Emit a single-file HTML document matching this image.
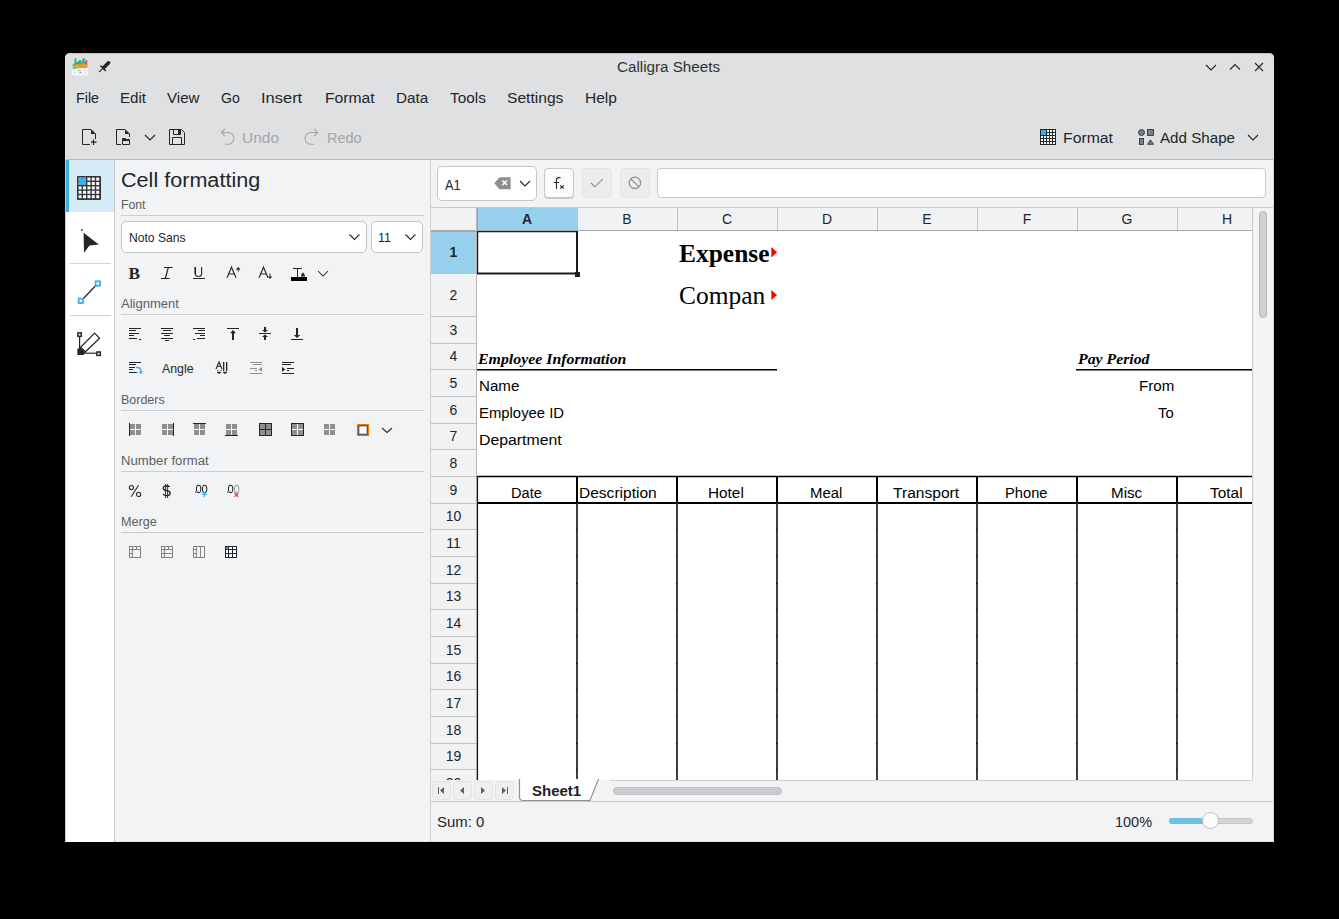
<!DOCTYPE html>
<html><head><meta charset="utf-8"><style>
*{box-sizing:border-box;margin:0;padding:0}
html,body{width:1339px;height:919px;background:#000;overflow:hidden;font-family:"Liberation Sans",sans-serif;color:#232629}
.a{position:absolute}
.t{position:absolute;white-space:nowrap;line-height:1;transform-origin:0 0}
svg.i{position:absolute;overflow:visible}

</style></head><body>
<div class="a" style="left:65px;top:53px;width:1209px;height:789px;background:#f2f3f5;border-radius:5px 5px 0 0"></div>
<div class="a" style="left:65px;top:53px;width:1209px;height:106px;background:#dee0e2;border-radius:5px 5px 0 0;border-top:1px solid #c4c6c8"></div>
<div class="a" style="left:65px;top:159px;width:1209px;height:1px;background:#b9bbbe;"></div>
<div class="a" style="left:65px;top:160px;width:1px;height:682px;background:#c9cbcd;"></div>
<div class="a" style="left:1273px;top:160px;width:1px;height:682px;background:#d8dadc;"></div>
<div class="a" style="left:65px;top:841px;width:1209px;height:1px;background:#e4e6e8;"></div>
<svg class="i" style="left:72px;top:58px" width="16" height="18" viewBox="0 0 16 18">
<rect x="0" y="10" width="16" height="7.6" fill="#f3f5f6" stroke="#e3e6e9" stroke-width="0.5"/>
<path d="M0.8 11 V6.5 L2.6 5 V0.2 H4.4 V5 L6.6 3 L7 2 H9.2 V5 L11 0.3 H12.8 V5 L15.2 2.5 V9 Z" fill="#1abc9c"/>
<rect x="4.8" y="4" width="1.3" height="4" fill="#da4453"/>
<rect x="9.9" y="4" width="1.3" height="3.4" fill="#da4453"/>
<rect x="13.5" y="2.2" width="1.6" height="7" fill="#da4453"/>
<path d="M0.8 6.5 L3 7 L5.5 5.8 L8 6.8 L10.5 5 L13 6.2 L15.2 5 V10 H0.8 Z" fill="#f39c1f"/>
<path d="M2 12.5h2.5M6.5 12.5h3M11.5 12.5h2.5M2 15h2M7 15h2.5M12 15h2" stroke="#d9c9c9" stroke-width="0.7"/>
<path d="M7.5 14.3h1.8" stroke="#da4453" stroke-width="0.8"/><path d="M6 12.2h1.5" stroke="#1abc9c" stroke-width="0.8"/>
</svg>
<svg class="i" style="left:97px;top:59px" width="14" height="14" viewBox="0 0 14 14"><path d="M2.2 12.9 L5.5 9.6" stroke="#232629" stroke-width="1.3"/><path d="M3.4 6.6 L8.8 12" stroke="#232629" stroke-width="1.4"/><path d="M6.8 8.6 L11.6 3.8" stroke="#232629" stroke-width="3.6" stroke-linecap="round"/></svg>
<svg class="i" style="left:1200px;top:57px" width="74" height="20" viewBox="0 0 74 20">
<path d="M6 8 L11 13 L16 8" fill="none" stroke="#232629" stroke-width="1.1"/>
<path d="M30 12.5 L35 7.5 L40 12.5" fill="none" stroke="#232629" stroke-width="1.1"/>
<path d="M55 6 L63 14 M63 6 L55 14" fill="none" stroke="#232629" stroke-width="1.1"/>
</svg>
<svg class="i" style="left:81px;top:129px" width="16" height="16" viewBox="0 0 16 16">
<path d="M1.5 15.5 V0.5 H10 L14.5 5 V10" fill="none" stroke="#232629"/>
<path d="M10 0.5 V5 H14.5 Z" fill="#232629"/>
<path d="M1.5 15.5 H9" stroke="#232629"/>
<path d="M12.5 10.5 V16 M10 13.2 H15.5" stroke="#232629" stroke-width="1.2"/>
</svg>
<svg class="i" style="left:115px;top:129px" width="16" height="16" viewBox="0 0 16 16">
<path d="M1.5 15.5 V0.5 H10 L14.5 5 V8" fill="none" stroke="#232629"/>
<path d="M10 0.5 V5 H14.5 Z" fill="#232629"/>
<path d="M1.5 15.5 H6" stroke="#232629"/>
<path d="M7.5 15.5 V9.5 H10.5 L11.5 10.5 H14.5 V15.5 Z" fill="none" stroke="#232629"/>
<path d="M7.5 9.5 H10.5 L11.5 10.5 H14.5 V12 H7.5Z" fill="#232629"/>
</svg>
<svg class="i" style="left:144px;top:133px" width="12" height="8" viewBox="0 0 12 8"><path d="M1 2 L6 7 L11 2" fill="none" stroke="#232629" stroke-width="1.1"/></svg>
<svg class="i" style="left:169px;top:129px" width="16" height="16" viewBox="0 0 16 16">
<path d="M0.5 0.5 H12.5 L15.5 3.5 V15.5 H0.5 Z" fill="none" stroke="#232629"/>
<path d="M4.5 0.5 V5.5 H11.5 V0.5" fill="none" stroke="#232629"/>
<rect x="9" y="1" width="2" height="4" fill="#232629"/>
<path d="M3.5 15.5 V8.5 H12.5 V15.5" fill="none" stroke="#232629"/>
</svg>
<svg class="i" style="left:221px;top:129px" width="14" height="16" viewBox="0 0 14 16">
<path d="M0.6 3.5 H7 A5.9 5.9 0 0 1 7 15.3 H3.8" fill="none" stroke="#a4a6a8" stroke-width="1.1"/>
<path d="M3.8 0 L0.4 3.5 L3.8 7" fill="none" stroke="#a4a6a8" stroke-width="1.1"/>
</svg>
<svg class="i" style="left:305px;top:129px" width="14" height="16" viewBox="0 0 14 16">
<path d="M12.4 3.5 H6 A5.9 5.9 0 0 0 6 15.3 H9.2" fill="none" stroke="#a4a6a8" stroke-width="1.1"/>
<path d="M9.2 0 L12.6 3.5 L9.2 7" fill="none" stroke="#a4a6a8" stroke-width="1.1"/>
</svg>
<svg class="i" style="left:1040px;top:129px" width="16" height="16" viewBox="0 0 16 16"><rect x="0" y="0" width="16" height="16" fill="#232629"/><rect x="1" y="1" width="2" height="2" fill="#fff"/><rect x="1" y="4" width="2" height="2" fill="#fff"/><rect x="1" y="7" width="2" height="2" fill="#fff"/><rect x="1" y="10" width="2" height="2" fill="#fff"/><rect x="1" y="13" width="2" height="2" fill="#fff"/><rect x="4" y="1" width="2" height="2" fill="#fff"/><rect x="4" y="4" width="2" height="2" fill="#fff"/><rect x="4" y="7" width="2" height="2" fill="#fff"/><rect x="4" y="10" width="2" height="2" fill="#fff"/><rect x="4" y="13" width="2" height="2" fill="#fff"/><rect x="7" y="1" width="2" height="2" fill="#fff"/><rect x="7" y="4" width="2" height="2" fill="#fff"/><rect x="7" y="7" width="2" height="2" fill="#fff"/><rect x="7" y="10" width="2" height="2" fill="#fff"/><rect x="7" y="13" width="2" height="2" fill="#fff"/><rect x="10" y="1" width="2" height="2" fill="#fff"/><rect x="10" y="4" width="2" height="2" fill="#fff"/><rect x="10" y="7" width="2" height="2" fill="#fff"/><rect x="10" y="10" width="2" height="2" fill="#fff"/><rect x="10" y="13" width="2" height="2" fill="#fff"/><rect x="13" y="1" width="2" height="2" fill="#fff"/><rect x="13" y="4" width="2" height="2" fill="#fff"/><rect x="13" y="7" width="2" height="2" fill="#fff"/><rect x="13" y="10" width="2" height="2" fill="#fff"/><rect x="13" y="13" width="2" height="2" fill="#fff"/><rect x="1" y="1" width="5" height="5" fill="#3daee9"/></svg>
<svg class="i" style="left:1138px;top:129px" width="16" height="16" viewBox="0 0 16 16">
<circle cx="3.5" cy="3.5" r="3" fill="#7b7e82" stroke="#232629" stroke-width="0.8"/>
<rect x="9.5" y="0.5" width="6" height="6" fill="#7b7e82" stroke="#232629" stroke-width="0.8"/>
<rect x="1.5" y="9.5" width="4" height="6" fill="#7b7e82" stroke="#232629" stroke-width="0.8"/>
<path d="M12.5 10.8 L15.5 15.3 H9.5 Z" fill="#7b7e82" stroke="#232629" stroke-width="0.8"/>
</svg>
<svg class="i" style="left:1247px;top:133px" width="12" height="8" viewBox="0 0 12 8"><path d="M1 2 L6 7 L11 2" fill="none" stroke="#232629" stroke-width="1.1"/></svg>
<div class="a" style="left:66px;top:160px;width:48px;height:682px;background:#ffffff;"></div>
<div class="a" style="left:114px;top:160px;width:1px;height:682px;background:#c6c8ca;"></div>
<div class="a" style="left:66px;top:160px;width:48px;height:52px;background:#d5ebf7;"></div>
<div class="a" style="left:66px;top:160px;width:3px;height:52px;background:#3daee9;"></div>
<svg class="i" style="left:77px;top:176px" width="24" height="24" viewBox="0 0 24 24"><rect x="0" y="0" width="24" height="24" rx="1" fill="#31363b"/><rect x="1.6" y="1.6" width="3" height="3" fill="#fff"/><rect x="1.6" y="6.0" width="3" height="3" fill="#fff"/><rect x="1.6" y="10.4" width="3" height="3" fill="#fff"/><rect x="1.6" y="14.8" width="3" height="3" fill="#fff"/><rect x="1.6" y="19.200000000000003" width="3" height="3" fill="#fff"/><rect x="6.0" y="1.6" width="3" height="3" fill="#fff"/><rect x="6.0" y="6.0" width="3" height="3" fill="#fff"/><rect x="6.0" y="10.4" width="3" height="3" fill="#fff"/><rect x="6.0" y="14.8" width="3" height="3" fill="#fff"/><rect x="6.0" y="19.200000000000003" width="3" height="3" fill="#fff"/><rect x="10.4" y="1.6" width="3" height="3" fill="#fff"/><rect x="10.4" y="6.0" width="3" height="3" fill="#fff"/><rect x="10.4" y="10.4" width="3" height="3" fill="#fff"/><rect x="10.4" y="14.8" width="3" height="3" fill="#fff"/><rect x="10.4" y="19.200000000000003" width="3" height="3" fill="#fff"/><rect x="14.8" y="1.6" width="3" height="3" fill="#fff"/><rect x="14.8" y="6.0" width="3" height="3" fill="#fff"/><rect x="14.8" y="10.4" width="3" height="3" fill="#fff"/><rect x="14.8" y="14.8" width="3" height="3" fill="#fff"/><rect x="14.8" y="19.200000000000003" width="3" height="3" fill="#fff"/><rect x="19.200000000000003" y="1.6" width="3" height="3" fill="#fff"/><rect x="19.200000000000003" y="6.0" width="3" height="3" fill="#fff"/><rect x="19.200000000000003" y="10.4" width="3" height="3" fill="#fff"/><rect x="19.200000000000003" y="14.8" width="3" height="3" fill="#fff"/><rect x="19.200000000000003" y="19.200000000000003" width="3" height="3" fill="#fff"/><rect x="1.6" y="1.6" width="7.4" height="7.4" fill="#3daee9"/></svg>
<div class="a" style="left:70px;top:263px;width:41px;height:1px;background:#d0d2d4;"></div>
<div class="a" style="left:70px;top:315px;width:41px;height:1px;background:#d0d2d4;"></div>
<svg class="i" style="left:80px;top:228px" width="20" height="26" viewBox="0 0 20 26"><rect x="1" y="1.2" width="1.6" height="1.6" fill="#232629"/><path d="M3.6 4.8 L18.8 16.5 L9.5 17.5 L4 24.8 Z" fill="#232629"/></svg>
<svg class="i" style="left:77px;top:280px" width="24" height="24" viewBox="0 0 24 24"><path d="M4 21 L20.5 3.8" stroke="#232629" stroke-width="1.3"/><rect x="1.6" y="18.6" width="4.4" height="4.4" fill="#fff" stroke="#3daee9" stroke-width="1.8"/><rect x="18.6" y="1.3" width="4.4" height="4.4" fill="#fff" stroke="#3daee9" stroke-width="1.8"/></svg>
<svg class="i" style="left:74px;top:328px" width="30" height="30" viewBox="0 0 30 30">
<path d="M5.6 8 V21" stroke="#232629" stroke-width="1.2"/>
<path d="M11 25.2 H23" stroke="#232629" stroke-width="1.2"/>
<rect x="3.9" y="4.9" width="3.4" height="3.4" fill="#fff" stroke="#232629" stroke-width="1.5"/>
<rect x="22.9" y="24" width="3.4" height="3.4" fill="#fff" stroke="#232629" stroke-width="1.5"/>
<path d="M20.6 5.2 L25.6 10.3 L11.4 23.8 L6.6 19.3 Z" fill="#fff" stroke="#232629" stroke-width="1.2" stroke-linejoin="miter"/>
<path d="M3.4 21 L6.3 19.2 L11.6 24.2 L9.6 27.1 L3.4 27.1 Z" fill="#232629"/>
</svg>
<div class="a" style="left:430px;top:160px;width:1px;height:682px;background:#cdcfd1;"></div>
<div class="a" style="left:121px;top:215px;width:303px;height:1px;background:#cbcdcf;"></div>
<div class="a" style="left:121px;top:314px;width:303px;height:1px;background:#cbcdcf;"></div>
<div class="a" style="left:121px;top:410px;width:303px;height:1px;background:#cbcdcf;"></div>
<div class="a" style="left:121px;top:471px;width:303px;height:1px;background:#cbcdcf;"></div>
<div class="a" style="left:121px;top:532px;width:303px;height:1px;background:#cbcdcf;"></div>
<div class="a" style="left:121px;top:221px;width:246px;height:32px;background:#fff;border:1px solid #c3c5c7;border-radius:5px"></div>
<div class="a" style="left:371px;top:221px;width:52px;height:32px;background:#fff;border:1px solid #c3c5c7;border-radius:5px"></div>
<svg class="i" style="left:348px;top:233px" width="14" height="9" viewBox="0 0 14 9"><path d="M1.5 1.5 L6.5 6.5 L11.5 1.5" fill="none" stroke="#232629" stroke-width="1.1"/></svg>
<svg class="i" style="left:404px;top:233px" width="14" height="9" viewBox="0 0 14 9"><path d="M1.5 1.5 L6.5 6.5 L11.5 1.5" fill="none" stroke="#232629" stroke-width="1.1"/></svg>
<svg class="i" style="left:128px;top:265px" width="15" height="16" viewBox="0 0 15 16"><text x="0.6" y="13.9" font-family="Liberation Serif" font-weight="bold" font-size="16.5" fill="#232629" transform="scale(1.05,1)">B</text></svg>
<svg class="i" style="left:160px;top:266px" width="14" height="14" viewBox="0 0 14 14"><path d="M4 1.5 H12.6 M1 12.5 H9.6 M8.3 1.5 L5.3 12.5" stroke="#232629" stroke-width="1.2" fill="none"/></svg>
<svg class="i" style="left:192px;top:266px" width="14" height="14" viewBox="0 0 14 14"><path d="M3.3 1 V7.5 Q3.3 10.5 6.5 10.5 Q9.6 10.5 9.6 7.5 V1" fill="none" stroke="#232629" stroke-width="1.1"/><path d="M3.3 1 V8" stroke="#232629" stroke-width="1.5"/></svg>
<svg class="i" style="left:226px;top:266px" width="15" height="13" viewBox="0 0 15 13"><path d="M1 11.8 L5.5 1.2 L10 11.8 M2.7 8 H8.3" fill="none" stroke="#232629" stroke-width="1.15"/><path d="M12.2 5.5 V2 M10.5 3.6 L12.2 1.8 L13.9 3.6" fill="none" stroke="#232629" stroke-width="1.05"/></svg>
<svg class="i" style="left:258px;top:266px" width="15" height="14" viewBox="0 0 15 14"><path d="M1 11.8 L5.5 1.2 L10 11.8 M2.7 8 H8.3" fill="none" stroke="#232629" stroke-width="1.15"/><path d="M12 7.5 V12 M10.3 10.5 L12 12.3 L13.7 10.5" fill="none" stroke="#232629" stroke-width="1.05"/></svg>
<svg class="i" style="left:300px;top:272px" width="6" height="5" viewBox="0 0 6 5"><path d="M0.8 4.6 L1.8 1.8 L3 0.6 L4.2 1.8 L5.2 4.6 Z" fill="#232629"/></svg>
<svg class="i" style="left:317px;top:270px" width="12" height="7" viewBox="0 0 12 7"><path d="M1 1 L6 6 L11 1" fill="none" stroke="#232629" stroke-width="1.05"/></svg>
<svg class="i" style="left:135px;top:366px" width="8" height="9" viewBox="0 0 8 9"><path d="M1.2 1.5 H2.5 Q5.8 1.5 5.8 4.8 V7" fill="none" stroke="#3daee9" stroke-width="1.3"/><path d="M3.6 5.6 L5.8 8.2 L8 5.6 Z" fill="#3daee9"/></svg>
<svg class="i" style="left:215px;top:361px" width="13" height="14" viewBox="0 0 13 14"><path d="M1 8 L4 1 L7 8 M2.2 5.3 H5.8" fill="none" stroke="#232629" stroke-width="1.1"/><path d="M2.4 9.4 h1 M5.6 9.4 h1" stroke="#232629" stroke-width="1"/><path d="M2 11.2 L4 12.6 L6 11.2 Z M8 11.2 L10 12.6 L12 11.2 Z" fill="#232629" stroke="#232629" stroke-width="0.8"/></svg>
<svg class="i" style="left:381px;top:427px" width="12" height="7" viewBox="0 0 12 7"><path d="M1 1 L6 5.5 L11 1" fill="none" stroke="#232629" stroke-width="1.05"/></svg>
<svg class="i" style="left:128px;top:483px" width="14" height="16" viewBox="0 0 14 16"><circle cx="3.4" cy="4.5" r="2.1" fill="none" stroke="#232629" stroke-width="1.05"/><circle cx="10.6" cy="11.4" r="2.1" fill="none" stroke="#232629" stroke-width="1.05"/><path d="M10.6 2.2 L3.2 13.7" stroke="#232629" stroke-width="1.05"/></svg>
<svg class="i" style="left:162px;top:483px" width="10" height="16" viewBox="0 0 10 16"><path d="M7.6 4 Q7 3 4.8 3 Q1.2 3 1.2 5.3 Q1.2 7.2 4.8 7.7 Q8.2 8.2 8.2 10.3 Q8.2 12.6 4.6 12.6 Q2 12.6 1 11" fill="none" stroke="#232629" stroke-width="1.3"/><path d="M3.6 1 V15 M5.6 1 V15" stroke="#232629" stroke-width="0.9"/></svg>
<svg class="i" style="left:194px;top:483px" width="15" height="15" viewBox="0 0 15 15"><rect x="1" y="8.6" width="1.1" height="1.1" fill="#232629"/><ellipse cx="4.6" cy="6" rx="2.2" ry="3.7" fill="none" stroke="#232629" stroke-width="1.05"/><ellipse cx="10.6" cy="6" rx="2.2" ry="3.7" fill="none" stroke="#232629" stroke-width="1.05"/><path d="M10.4 8.8 V14 M7.9 11.4 H12.9" stroke="#3daee9" stroke-width="1.3"/></svg>
<svg class="i" style="left:226px;top:483px" width="15" height="15" viewBox="0 0 15 15"><rect x="1" y="8.6" width="1.1" height="1.1" fill="#232629"/><ellipse cx="4.6" cy="6" rx="2.2" ry="3.7" fill="none" stroke="#232629" stroke-width="1.05"/><ellipse cx="10.6" cy="6" rx="2.2" ry="3.7" fill="none" stroke="#95979a" stroke-width="1.05"/><path d="M8.5 10 L12.3 13.8 M12.3 10 L8.5 13.8" stroke="#da4453" stroke-width="1.2"/></svg>
<svg class="i" style="left:0;top:0" width="1339" height="919" shape-rendering="auto"><rect x="193" y="278" width="12" height="1" fill="#232629"/><rect x="293" y="268" width="9" height="1" fill="#232629"/><rect x="297" y="268" width="1" height="9" fill="#232629"/><rect x="291" y="277" width="16" height="4" fill="#000"/><rect x="129" y="328" width="12" height="1" fill="#232629"/><rect x="129" y="330" width="7" height="1" fill="#232629"/><rect x="129" y="333" width="10" height="1" fill="#232629"/><rect x="129" y="335" width="5" height="1" fill="#232629"/><rect x="129" y="338" width="8" height="1" fill="#232629"/><rect x="139" y="339" width="2" height="1" fill="#232629"/><rect x="161" y="328" width="12" height="1" fill="#232629"/><rect x="163" y="330" width="8" height="1" fill="#232629"/><rect x="161" y="333" width="12" height="1" fill="#232629"/><rect x="164" y="335" width="6" height="1" fill="#232629"/><rect x="161" y="338" width="12" height="1" fill="#232629"/><rect x="165" y="340" width="4" height="1" fill="#232629"/><rect x="193" y="328" width="12" height="1" fill="#232629"/><rect x="198" y="330" width="7" height="1" fill="#232629"/><rect x="195" y="333" width="10" height="1" fill="#232629"/><rect x="200" y="335" width="5" height="1" fill="#232629"/><rect x="197" y="338" width="8" height="1" fill="#232629"/><rect x="193" y="339" width="2" height="1" fill="#232629"/><rect x="227" y="328" width="12" height="1" fill="#232629"/><rect x="232" y="333" width="2" height="7" fill="#232629"/><path d="M230 333.3 L233 330 L236 333.3 Z" fill="#232629"/><rect x="259" y="333" width="12" height="1" fill="#232629"/><rect x="264" y="327" width="2" height="3" fill="#232629"/><path d="M262 330 L265 332.6 L268 330 Z" fill="#232629"/><rect x="264" y="337" width="2" height="3" fill="#232629"/><path d="M262 337 L265 334.4 L268 337 Z" fill="#232629"/><rect x="291" y="339" width="12" height="1" fill="#232629"/><rect x="296" y="328" width="2" height="7" fill="#232629"/><path d="M293.8 335 L297 338 L300.2 335 Z" fill="#232629"/><rect x="129" y="362" width="12" height="1" fill="#232629"/><rect x="129" y="364" width="7" height="1" fill="#232629"/><rect x="129" y="367" width="6" height="1" fill="#232629"/><rect x="129" y="369" width="4" height="1" fill="#232629"/><rect x="129" y="372" width="8" height="1" fill="#232629"/><rect x="223" y="362" width="1.3" height="9" fill="#232629"/><rect x="226" y="362" width="1.3" height="9" fill="#232629"/><rect x="250" y="362" width="12" height="1" fill="#8d8f91"/><rect x="253" y="364" width="9" height="1" fill="#8d8f91"/><rect x="250" y="368" width="7" height="1" fill="#8d8f91"/><rect x="255" y="370" width="2" height="1" fill="#8d8f91"/><rect x="250" y="373" width="12" height="1" fill="#8d8f91"/><path d="M262 367 L258.6 369.4 L262 371.8 Z" fill="#8d8f91"/><rect x="282" y="362" width="12" height="1" fill="#232629"/><rect x="282" y="364" width="9" height="1" fill="#232629"/><rect x="287" y="368" width="7" height="1" fill="#232629"/><rect x="287" y="370" width="2" height="1" fill="#232629"/><rect x="282" y="373" width="12" height="1" fill="#232629"/><path d="M282 367 L285.4 369.4 L282 371.8 Z" fill="#232629"/><rect x="130" y="424" width="5" height="5" fill="#8e8f91"/><rect x="130" y="430" width="5" height="5" fill="#8e8f91"/><rect x="136" y="424" width="5" height="5" fill="#8e8f91"/><rect x="136" y="430" width="5" height="5" fill="#8e8f91"/><rect x="129" y="423" width="1" height="13" fill="#232629"/><rect x="162" y="424" width="5" height="5" fill="#8e8f91"/><rect x="162" y="430" width="5" height="5" fill="#8e8f91"/><rect x="168" y="424" width="5" height="5" fill="#8e8f91"/><rect x="168" y="430" width="5" height="5" fill="#8e8f91"/><rect x="173" y="423" width="1" height="13" fill="#232629"/><rect x="194" y="424" width="5" height="5" fill="#8e8f91"/><rect x="194" y="430" width="5" height="5" fill="#8e8f91"/><rect x="200" y="424" width="5" height="5" fill="#8e8f91"/><rect x="200" y="430" width="5" height="5" fill="#8e8f91"/><rect x="193" y="423" width="13" height="1" fill="#232629"/><rect x="226" y="424" width="5" height="5" fill="#8e8f91"/><rect x="226" y="430" width="5" height="5" fill="#8e8f91"/><rect x="232" y="424" width="5" height="5" fill="#8e8f91"/><rect x="232" y="430" width="5" height="5" fill="#8e8f91"/><rect x="225" y="435" width="13" height="1" fill="#232629"/><rect x="260" y="424" width="5" height="5" fill="#8e8f91"/><rect x="260" y="430" width="5" height="5" fill="#8e8f91"/><rect x="266" y="424" width="5" height="5" fill="#8e8f91"/><rect x="266" y="430" width="5" height="5" fill="#8e8f91"/><rect x="259.5" y="423.5" width="12" height="12" fill="none" stroke="#232629"/><rect x="265" y="424" width="1" height="11" fill="#232629"/><rect x="260" y="429" width="11" height="1" fill="#232629"/><rect x="292" y="424" width="5" height="5" fill="#8e8f91"/><rect x="292" y="430" width="5" height="5" fill="#8e8f91"/><rect x="298" y="424" width="5" height="5" fill="#8e8f91"/><rect x="298" y="430" width="5" height="5" fill="#8e8f91"/><rect x="291.5" y="423.5" width="12" height="12" fill="none" stroke="#232629"/><rect x="297" y="424" width="1" height="11" fill="#fff"/><rect x="292" y="429" width="11" height="1" fill="#fff"/><rect x="324" y="424" width="5" height="5" fill="#8e8f91"/><rect x="324" y="430" width="5" height="5" fill="#8e8f91"/><rect x="330" y="424" width="5" height="5" fill="#8e8f91"/><rect x="330" y="430" width="5" height="5" fill="#8e8f91"/><rect x="357.6" y="424.6" width="10.8" height="10.8" fill="#fff" stroke="#f67400" stroke-width="1.3"/><rect x="358.75" y="425.75" width="8.5" height="8.5" fill="none" stroke="#232629" stroke-width="1"/><rect x="129.5" y="546.5" width="11" height="11" fill="none" stroke="#828486"/><rect x="129" y="549" width="12" height="1" fill="#828486"/><rect x="132" y="546" width="1" height="12" fill="#828486"/><rect x="136" y="546" width="1" height="3" fill="#828486"/><rect x="129" y="553" width="4" height="1" fill="#828486"/><rect x="161.5" y="546.5" width="11" height="11" fill="none" stroke="#828486"/><rect x="161" y="549" width="12" height="1" fill="#828486"/><rect x="161" y="553" width="12" height="1" fill="#828486"/><rect x="164" y="546" width="1" height="12" fill="#828486"/><rect x="168" y="546" width="1" height="3" fill="#828486"/><rect x="193.5" y="546.5" width="11" height="11" fill="none" stroke="#828486"/><rect x="193" y="549" width="4" height="1" fill="#828486"/><rect x="193" y="553" width="4" height="1" fill="#828486"/><rect x="196" y="546" width="1" height="12" fill="#828486"/><rect x="200" y="546" width="1" height="12" fill="#828486"/><rect x="225" y="546" width="12" height="12" fill="#232629"/><rect x="226" y="547" width="2" height="2" fill="#fff"/><rect x="226" y="550" width="2" height="3" fill="#fff"/><rect x="226" y="554" width="2" height="3" fill="#fff"/><rect x="229" y="547" width="3" height="2" fill="#fff"/><rect x="229" y="550" width="3" height="3" fill="#fff"/><rect x="229" y="554" width="3" height="3" fill="#fff"/><rect x="233" y="547" width="3" height="2" fill="#fff"/><rect x="233" y="550" width="3" height="3" fill="#fff"/><rect x="233" y="554" width="3" height="3" fill="#fff"/><rect x="226" y="547" width="2" height="2" fill="#3daee9"/></svg>
<div class="a" style="left:437px;top:166px;width:100px;height:35px;background:#fff;border:1px solid #c4c6c8;border-radius:5px"></div>
<svg class="i" style="left:494px;top:176.5px" width="17" height="13" viewBox="0 0 17 13"><path d="M0.3 6.3 L5.5 0.3 H16.6 V12.3 H5.5 Z" fill="#8c8e90"/><path d="M8.5 3.5 L13 8 M13 3.5 L8.5 8" stroke="#fff" stroke-width="1.6"/></svg>
<svg class="i" style="left:519px;top:180px" width="12" height="7" viewBox="0 0 12 7"><path d="M1 1 L6 6 L11 1" fill="none" stroke="#232629" stroke-width="1.1"/></svg>
<div class="a" style="left:544px;top:168px;width:30px;height:30px;background:#fcfcfc;border:1px solid #c5c7c9;border-radius:4px;box-shadow:0 1px 0 #c9cbcd"></div>
<svg class="i" style="left:544px;top:168px" width="30" height="30" viewBox="0 0 30 30"><path d="M12.5 21 V12 Q12.5 9.6 14.8 9.6 H16.5" fill="none" stroke="#232629" stroke-width="1.05"/><path d="M9.8 14.5 H15.2" stroke="#232629" stroke-width="1.05"/><path d="M16.2 17.3 L19.8 20.7 M19.8 17.3 L16.2 20.7" stroke="#232629" stroke-width="1.1"/></svg>
<div class="a" style="left:582px;top:168px;width:30px;height:30px;background:#ececed;border:1px solid #e1e2e4;border-radius:4px"></div>
<svg class="i" style="left:590px;top:178px" width="14" height="10" viewBox="0 0 14 10"><path d="M1 5 L4.8 8.8 L13 0.8" fill="none" stroke="#8a8c8e" stroke-width="1.1"/></svg>
<div class="a" style="left:620px;top:168px;width:30px;height:30px;background:#ececed;border:1px solid #e1e2e4;border-radius:4px"></div>
<svg class="i" style="left:628px;top:176px" width="14" height="14" viewBox="0 0 14 14"><circle cx="6.9" cy="6.9" r="5.7" fill="none" stroke="#8a8c8e" stroke-width="1.2"/><path d="M2.9 2.9 L10.9 10.9" stroke="#8a8c8e" stroke-width="1.2"/></svg>
<div class="a" style="left:657px;top:168px;width:609px;height:30px;background:#fff;border:1px solid #c8cacc;border-radius:4px"></div>
<div class="a" style="left:431px;top:207px;width:842px;height:1px;background:#c8c9cb;"></div>
<div class="a" style="left:431px;top:208px;width:821px;height:22px;background:#f1f2f4;"></div>
<div class="a" style="left:477px;top:208px;width:100px;height:22px;background:#97d0ed;"></div>
<div class="a" style="left:431px;top:230px;width:821px;height:1px;background:#a9abad;"></div>
<div class="a" style="left:431px;top:231px;width:45px;height:549px;background:#f1f2f4;"></div>
<div class="a" style="left:431px;top:231px;width:45px;height:42px;background:#97d0ed;"></div>
<div class="a" style="left:476px;top:208px;width:1px;height:572px;background:#b5b7b9;"></div>
<div class="a" style="left:477px;top:208px;width:1px;height:22px;background:#6fb3dc;"></div>
<div class="a" style="left:431px;top:231px;width:45px;height:1px;background:#6fb3dc;"></div>
<div class="a" style="left:577px;top:208px;width:1px;height:22px;background:#c0c2c4;"></div>
<div class="a" style="left:677px;top:208px;width:1px;height:22px;background:#c0c2c4;"></div>
<div class="a" style="left:777px;top:208px;width:1px;height:22px;background:#c0c2c4;"></div>
<div class="a" style="left:877px;top:208px;width:1px;height:22px;background:#c0c2c4;"></div>
<div class="a" style="left:977px;top:208px;width:1px;height:22px;background:#c0c2c4;"></div>
<div class="a" style="left:1077px;top:208px;width:1px;height:22px;background:#c0c2c4;"></div>
<div class="a" style="left:1177px;top:208px;width:1px;height:22px;background:#c0c2c4;"></div>
<div class="a" style="left:477px;top:231px;width:775px;height:549px;background:#fff;"></div>
<svg class="i" style="left:431px;top:231px" width="45" height="549" viewBox="0 0 45 549"><line x1="0" x2="45" y1="42.5" y2="42.5" stroke="#c0c2c4" stroke-width="1"/><line x1="0" x2="45" y1="85.5" y2="85.5" stroke="#c0c2c4" stroke-width="1"/><line x1="0" x2="45" y1="112.5" y2="112.5" stroke="#c0c2c4" stroke-width="1"/><line x1="0" x2="45" y1="138.5" y2="138.5" stroke="#c0c2c4" stroke-width="1"/><line x1="0" x2="45" y1="165.5" y2="165.5" stroke="#c0c2c4" stroke-width="1"/><line x1="0" x2="45" y1="192.5" y2="192.5" stroke="#c0c2c4" stroke-width="1"/><line x1="0" x2="45" y1="218.5" y2="218.5" stroke="#c0c2c4" stroke-width="1"/><line x1="0" x2="45" y1="245.5" y2="245.5" stroke="#c0c2c4" stroke-width="1"/><line x1="0" x2="45" y1="272.5" y2="272.5" stroke="#c0c2c4" stroke-width="1"/><line x1="0" x2="45" y1="298.5" y2="298.5" stroke="#c0c2c4" stroke-width="1"/><line x1="0" x2="45" y1="325.5" y2="325.5" stroke="#c0c2c4" stroke-width="1"/><line x1="0" x2="45" y1="352.5" y2="352.5" stroke="#c0c2c4" stroke-width="1"/><line x1="0" x2="45" y1="378.5" y2="378.5" stroke="#c0c2c4" stroke-width="1"/><line x1="0" x2="45" y1="405.5" y2="405.5" stroke="#c0c2c4" stroke-width="1"/><line x1="0" x2="45" y1="432.5" y2="432.5" stroke="#c0c2c4" stroke-width="1"/><line x1="0" x2="45" y1="458.5" y2="458.5" stroke="#c0c2c4" stroke-width="1"/><line x1="0" x2="45" y1="485.5" y2="485.5" stroke="#c0c2c4" stroke-width="1"/><line x1="0" x2="45" y1="512.5" y2="512.5" stroke="#c0c2c4" stroke-width="1"/><line x1="0" x2="45" y1="538.5" y2="538.5" stroke="#c0c2c4" stroke-width="1"/></svg>
<div class="a" style="left:1252px;top:207px;width:1px;height:573px;background:#c8c9cb;"></div>
<div class="a" style="left:1253px;top:208px;width:20px;height:572px;background:#f2f3f5;"></div>
<div class="a" style="left:1259px;top:211px;width:8px;height:107px;background:#d0d1d3;border:1px solid #b5b7b9;border-radius:4px"></div>
<svg class="i" style="left:0;top:0" width="1339" height="919"><line x1="477" y1="369.8" x2="777" y2="369.8" stroke="#000" stroke-width="1.5"/><line x1="1076" y1="369.8" x2="1252" y2="369.8" stroke="#000" stroke-width="1.5"/><line x1="477" y1="476.5" x2="1252" y2="476.5" stroke="#000" stroke-width="1.3"/><line x1="477" y1="503" x2="1252" y2="503" stroke="#000" stroke-width="2"/><line x1="477.5" y1="476" x2="477.5" y2="780" stroke="#1a1a1a" stroke-width="1.2"/><line x1="577.0" y1="476" x2="577.0" y2="503" stroke="#000" stroke-width="2"/><line x1="577.0" y1="503" x2="577.0" y2="780" stroke="#404040" stroke-width="2"/><line x1="677.0" y1="476" x2="677.0" y2="503" stroke="#000" stroke-width="2"/><line x1="677.0" y1="503" x2="677.0" y2="780" stroke="#404040" stroke-width="2"/><line x1="777.0" y1="476" x2="777.0" y2="503" stroke="#000" stroke-width="2"/><line x1="777.0" y1="503" x2="777.0" y2="780" stroke="#404040" stroke-width="2"/><line x1="877.0" y1="476" x2="877.0" y2="503" stroke="#000" stroke-width="2"/><line x1="877.0" y1="503" x2="877.0" y2="780" stroke="#404040" stroke-width="2"/><line x1="977.0" y1="476" x2="977.0" y2="503" stroke="#000" stroke-width="2"/><line x1="977.0" y1="503" x2="977.0" y2="780" stroke="#404040" stroke-width="2"/><line x1="1077.0" y1="476" x2="1077.0" y2="503" stroke="#000" stroke-width="2"/><line x1="1077.0" y1="503" x2="1077.0" y2="780" stroke="#404040" stroke-width="2"/><line x1="1177.0" y1="476" x2="1177.0" y2="503" stroke="#000" stroke-width="2"/><line x1="1177.0" y1="503" x2="1177.0" y2="780" stroke="#404040" stroke-width="2"/><line x1="576" y1="503.5" x2="577.0" y2="503.5" stroke="#000" stroke-width="1"/><line x1="676" y1="503.5" x2="677.0" y2="503.5" stroke="#000" stroke-width="1"/><line x1="776" y1="503.5" x2="777.0" y2="503.5" stroke="#000" stroke-width="1"/><line x1="876" y1="503.5" x2="877.0" y2="503.5" stroke="#000" stroke-width="1"/><line x1="976" y1="503.5" x2="977.0" y2="503.5" stroke="#000" stroke-width="1"/><line x1="1076" y1="503.5" x2="1077.0" y2="503.5" stroke="#000" stroke-width="1"/><line x1="1176" y1="503.5" x2="1177.0" y2="503.5" stroke="#000" stroke-width="1"/><line x1="576" y1="529.5" x2="577.0" y2="529.5" stroke="#000" stroke-width="1"/><line x1="676" y1="529.5" x2="677.0" y2="529.5" stroke="#000" stroke-width="1"/><line x1="776" y1="529.5" x2="777.0" y2="529.5" stroke="#000" stroke-width="1"/><line x1="876" y1="529.5" x2="877.0" y2="529.5" stroke="#000" stroke-width="1"/><line x1="976" y1="529.5" x2="977.0" y2="529.5" stroke="#000" stroke-width="1"/><line x1="1076" y1="529.5" x2="1077.0" y2="529.5" stroke="#000" stroke-width="1"/><line x1="1176" y1="529.5" x2="1177.0" y2="529.5" stroke="#000" stroke-width="1"/><line x1="576" y1="556.5" x2="577.0" y2="556.5" stroke="#000" stroke-width="1"/><line x1="676" y1="556.5" x2="677.0" y2="556.5" stroke="#000" stroke-width="1"/><line x1="776" y1="556.5" x2="777.0" y2="556.5" stroke="#000" stroke-width="1"/><line x1="876" y1="556.5" x2="877.0" y2="556.5" stroke="#000" stroke-width="1"/><line x1="976" y1="556.5" x2="977.0" y2="556.5" stroke="#000" stroke-width="1"/><line x1="1076" y1="556.5" x2="1077.0" y2="556.5" stroke="#000" stroke-width="1"/><line x1="1176" y1="556.5" x2="1177.0" y2="556.5" stroke="#000" stroke-width="1"/><line x1="576" y1="583.5" x2="577.0" y2="583.5" stroke="#000" stroke-width="1"/><line x1="676" y1="583.5" x2="677.0" y2="583.5" stroke="#000" stroke-width="1"/><line x1="776" y1="583.5" x2="777.0" y2="583.5" stroke="#000" stroke-width="1"/><line x1="876" y1="583.5" x2="877.0" y2="583.5" stroke="#000" stroke-width="1"/><line x1="976" y1="583.5" x2="977.0" y2="583.5" stroke="#000" stroke-width="1"/><line x1="1076" y1="583.5" x2="1077.0" y2="583.5" stroke="#000" stroke-width="1"/><line x1="1176" y1="583.5" x2="1177.0" y2="583.5" stroke="#000" stroke-width="1"/><line x1="576" y1="609.5" x2="577.0" y2="609.5" stroke="#000" stroke-width="1"/><line x1="676" y1="609.5" x2="677.0" y2="609.5" stroke="#000" stroke-width="1"/><line x1="776" y1="609.5" x2="777.0" y2="609.5" stroke="#000" stroke-width="1"/><line x1="876" y1="609.5" x2="877.0" y2="609.5" stroke="#000" stroke-width="1"/><line x1="976" y1="609.5" x2="977.0" y2="609.5" stroke="#000" stroke-width="1"/><line x1="1076" y1="609.5" x2="1077.0" y2="609.5" stroke="#000" stroke-width="1"/><line x1="1176" y1="609.5" x2="1177.0" y2="609.5" stroke="#000" stroke-width="1"/><line x1="576" y1="636.5" x2="577.0" y2="636.5" stroke="#000" stroke-width="1"/><line x1="676" y1="636.5" x2="677.0" y2="636.5" stroke="#000" stroke-width="1"/><line x1="776" y1="636.5" x2="777.0" y2="636.5" stroke="#000" stroke-width="1"/><line x1="876" y1="636.5" x2="877.0" y2="636.5" stroke="#000" stroke-width="1"/><line x1="976" y1="636.5" x2="977.0" y2="636.5" stroke="#000" stroke-width="1"/><line x1="1076" y1="636.5" x2="1077.0" y2="636.5" stroke="#000" stroke-width="1"/><line x1="1176" y1="636.5" x2="1177.0" y2="636.5" stroke="#000" stroke-width="1"/><line x1="576" y1="663.5" x2="577.0" y2="663.5" stroke="#000" stroke-width="1"/><line x1="676" y1="663.5" x2="677.0" y2="663.5" stroke="#000" stroke-width="1"/><line x1="776" y1="663.5" x2="777.0" y2="663.5" stroke="#000" stroke-width="1"/><line x1="876" y1="663.5" x2="877.0" y2="663.5" stroke="#000" stroke-width="1"/><line x1="976" y1="663.5" x2="977.0" y2="663.5" stroke="#000" stroke-width="1"/><line x1="1076" y1="663.5" x2="1077.0" y2="663.5" stroke="#000" stroke-width="1"/><line x1="1176" y1="663.5" x2="1177.0" y2="663.5" stroke="#000" stroke-width="1"/><line x1="576" y1="689.5" x2="577.0" y2="689.5" stroke="#000" stroke-width="1"/><line x1="676" y1="689.5" x2="677.0" y2="689.5" stroke="#000" stroke-width="1"/><line x1="776" y1="689.5" x2="777.0" y2="689.5" stroke="#000" stroke-width="1"/><line x1="876" y1="689.5" x2="877.0" y2="689.5" stroke="#000" stroke-width="1"/><line x1="976" y1="689.5" x2="977.0" y2="689.5" stroke="#000" stroke-width="1"/><line x1="1076" y1="689.5" x2="1077.0" y2="689.5" stroke="#000" stroke-width="1"/><line x1="1176" y1="689.5" x2="1177.0" y2="689.5" stroke="#000" stroke-width="1"/><line x1="576" y1="716.5" x2="577.0" y2="716.5" stroke="#000" stroke-width="1"/><line x1="676" y1="716.5" x2="677.0" y2="716.5" stroke="#000" stroke-width="1"/><line x1="776" y1="716.5" x2="777.0" y2="716.5" stroke="#000" stroke-width="1"/><line x1="876" y1="716.5" x2="877.0" y2="716.5" stroke="#000" stroke-width="1"/><line x1="976" y1="716.5" x2="977.0" y2="716.5" stroke="#000" stroke-width="1"/><line x1="1076" y1="716.5" x2="1077.0" y2="716.5" stroke="#000" stroke-width="1"/><line x1="1176" y1="716.5" x2="1177.0" y2="716.5" stroke="#000" stroke-width="1"/><line x1="576" y1="743.5" x2="577.0" y2="743.5" stroke="#000" stroke-width="1"/><line x1="676" y1="743.5" x2="677.0" y2="743.5" stroke="#000" stroke-width="1"/><line x1="776" y1="743.5" x2="777.0" y2="743.5" stroke="#000" stroke-width="1"/><line x1="876" y1="743.5" x2="877.0" y2="743.5" stroke="#000" stroke-width="1"/><line x1="976" y1="743.5" x2="977.0" y2="743.5" stroke="#000" stroke-width="1"/><line x1="1076" y1="743.5" x2="1077.0" y2="743.5" stroke="#000" stroke-width="1"/><line x1="1176" y1="743.5" x2="1177.0" y2="743.5" stroke="#000" stroke-width="1"/><line x1="576" y1="769.5" x2="577.0" y2="769.5" stroke="#000" stroke-width="1"/><line x1="676" y1="769.5" x2="677.0" y2="769.5" stroke="#000" stroke-width="1"/><line x1="776" y1="769.5" x2="777.0" y2="769.5" stroke="#000" stroke-width="1"/><line x1="876" y1="769.5" x2="877.0" y2="769.5" stroke="#000" stroke-width="1"/><line x1="976" y1="769.5" x2="977.0" y2="769.5" stroke="#000" stroke-width="1"/><line x1="1076" y1="769.5" x2="1077.0" y2="769.5" stroke="#000" stroke-width="1"/><line x1="1176" y1="769.5" x2="1177.0" y2="769.5" stroke="#000" stroke-width="1"/><line x1="477.6" y1="231" x2="477.6" y2="274" stroke="#1b1e20" stroke-width="1.3"/><line x1="477" y1="231.6" x2="577" y2="231.6" stroke="#1b1e20" stroke-width="1.3"/><line x1="577" y1="231" x2="577" y2="274" stroke="#1b1e20" stroke-width="2"/><line x1="477" y1="273.5" x2="578" y2="273.5" stroke="#1b1e20" stroke-width="2"/><rect x="575" y="272" width="5" height="5" fill="#1b1e20"/><path d="M771.3 247.1 L777.1 252.3 L771.3 257.4 Z" fill="#ff0000"/><path d="M771.3 290.1 L777.1 295 L771.3 300 Z" fill="#ff0000"/></svg>
<div class="t" style="left:617.40px;top:60.00px;font-size:14px;font-family:'Liberation Sans',sans-serif;color:#2f3337;;transform:scaleX(1.0849);">Calligra Sheets</div>
<div class="t" style="left:75.90px;top:91.00px;font-size:14px;font-family:'Liberation Sans',sans-serif;color:#232629;;transform:scaleX(1.0194);">File</div>
<div class="t" style="left:120.40px;top:91.00px;font-size:14px;font-family:'Liberation Sans',sans-serif;color:#232629;;transform:scaleX(1.0777);">Edit</div>
<div class="t" style="left:167.40px;top:91.00px;font-size:14px;font-family:'Liberation Sans',sans-serif;color:#232629;;transform:scaleX(1.0800);">View</div>
<div class="t" style="left:220.80px;top:91.00px;font-size:14px;font-family:'Liberation Sans',sans-serif;color:#232629;;transform:scaleX(1.0060);">Go</div>
<div class="t" style="left:261.00px;top:91.00px;font-size:14px;font-family:'Liberation Sans',sans-serif;color:#232629;;transform:scaleX(1.1766);">Insert</div>
<div class="t" style="left:324.80px;top:91.00px;font-size:14px;font-family:'Liberation Sans',sans-serif;color:#232629;;transform:scaleX(1.1208);">Format</div>
<div class="t" style="left:396.10px;top:91.00px;font-size:14px;font-family:'Liberation Sans',sans-serif;color:#232629;;transform:scaleX(1.0920);">Data</div>
<div class="t" style="left:449.90px;top:91.00px;font-size:14px;font-family:'Liberation Sans',sans-serif;color:#232629;;transform:scaleX(1.0952);">Tools</div>
<div class="t" style="left:507.00px;top:91.00px;font-size:14px;font-family:'Liberation Sans',sans-serif;color:#232629;;transform:scaleX(1.1148);">Settings</div>
<div class="t" style="left:584.70px;top:91.00px;font-size:14px;font-family:'Liberation Sans',sans-serif;color:#232629;;transform:scaleX(1.1078);">Help</div>
<div class="t" style="left:242.30px;top:131.00px;font-size:14px;font-family:'Liberation Sans',sans-serif;color:#a4a6a8;;transform:scaleX(1.1055);">Undo</div>
<div class="t" style="left:327.10px;top:131.00px;font-size:14px;font-family:'Liberation Sans',sans-serif;color:#a4a6a8;;transform:scaleX(1.0338);">Redo</div>
<div class="t" style="left:1062.70px;top:131.00px;font-size:14px;font-family:'Liberation Sans',sans-serif;color:#232629;;transform:scaleX(1.1276);">Format</div>
<div class="t" style="left:1160.40px;top:131.00px;font-size:14px;font-family:'Liberation Sans',sans-serif;color:#232629;;transform:scaleX(1.0823);">Add Shape</div>
<div class="t" style="left:121.00px;top:171.10px;font-size:19.5px;font-family:'Liberation Sans',sans-serif;color:#232629;;transform:scaleX(1.1072);">Cell formatting</div>
<div class="t" style="left:121.00px;top:198.90px;font-size:12px;font-family:'Liberation Sans',sans-serif;color:#5b5f63;;transform:scaleX(1.0202);">Font</div>
<div class="t" style="left:129.10px;top:231.00px;font-size:13px;font-family:'Liberation Sans',sans-serif;color:#232629;;transform:scaleX(0.9308);">Noto Sans</div>
<div class="t" style="left:378.40px;top:231.00px;font-size:13px;font-family:'Liberation Sans',sans-serif;color:#232629;;transform:scaleX(0.9630);">11</div>
<div class="t" style="left:120.70px;top:298.20px;font-size:12px;font-family:'Liberation Sans',sans-serif;color:#5b5f63;;transform:scaleX(1.0867);">Alignment</div>
<div class="t" style="left:162.00px;top:362.30px;font-size:13px;font-family:'Liberation Sans',sans-serif;color:#232629;;transform:scaleX(0.9474);">Angle</div>
<div class="t" style="left:120.70px;top:393.70px;font-size:12px;font-family:'Liberation Sans',sans-serif;color:#5b5f63;;transform:scaleX(1.0397);">Borders</div>
<div class="t" style="left:120.70px;top:454.70px;font-size:12px;font-family:'Liberation Sans',sans-serif;color:#5b5f63;;transform:scaleX(1.0958);">Number format</div>
<div class="t" style="left:120.90px;top:515.90px;font-size:12px;font-family:'Liberation Sans',sans-serif;color:#5b5f63;;transform:scaleX(1.0495);">Merge</div>
<div class="t" style="left:445.40px;top:178.00px;font-size:14px;font-family:'Liberation Sans',sans-serif;color:#232629;;transform:scaleX(0.9168);">A1</div>
<div class="t" style="left:521.94px;top:212.00px;font-size:14px;font-family:'Liberation Sans',sans-serif;color:#232629;font-weight:bold;">A</div>
<div class="t" style="left:622.33px;top:212.00px;font-size:14px;font-family:'Liberation Sans',sans-serif;color:#232629;;">B</div>
<div class="t" style="left:721.94px;top:212.00px;font-size:14px;font-family:'Liberation Sans',sans-serif;color:#232629;;">C</div>
<div class="t" style="left:821.94px;top:212.00px;font-size:14px;font-family:'Liberation Sans',sans-serif;color:#232629;;">D</div>
<div class="t" style="left:922.33px;top:212.00px;font-size:14px;font-family:'Liberation Sans',sans-serif;color:#232629;;">E</div>
<div class="t" style="left:1022.72px;top:212.00px;font-size:14px;font-family:'Liberation Sans',sans-serif;color:#232629;;">F</div>
<div class="t" style="left:1121.55px;top:212.00px;font-size:14px;font-family:'Liberation Sans',sans-serif;color:#232629;;">G</div>
<div class="t" style="left:1221.94px;top:212.00px;font-size:14px;font-family:'Liberation Sans',sans-serif;color:#232629;;">H</div>
<div class="t" style="left:449.60px;top:245.33px;font-size:14px;font-family:'Liberation Sans',sans-serif;color:#232629;font-weight:bold;">1</div>
<div class="t" style="left:449.60px;top:288.01px;font-size:14px;font-family:'Liberation Sans',sans-serif;color:#232629;;">2</div>
<div class="t" style="left:449.60px;top:322.68px;font-size:14px;font-family:'Liberation Sans',sans-serif;color:#232629;;">3</div>
<div class="t" style="left:449.60px;top:349.35px;font-size:14px;font-family:'Liberation Sans',sans-serif;color:#232629;;">4</div>
<div class="t" style="left:449.60px;top:376.02px;font-size:14px;font-family:'Liberation Sans',sans-serif;color:#232629;;">5</div>
<div class="t" style="left:449.60px;top:402.69px;font-size:14px;font-family:'Liberation Sans',sans-serif;color:#232629;;">6</div>
<div class="t" style="left:449.60px;top:429.36px;font-size:14px;font-family:'Liberation Sans',sans-serif;color:#232629;;">7</div>
<div class="t" style="left:449.60px;top:456.03px;font-size:14px;font-family:'Liberation Sans',sans-serif;color:#232629;;">8</div>
<div class="t" style="left:449.60px;top:482.70px;font-size:14px;font-family:'Liberation Sans',sans-serif;color:#232629;;">9</div>
<div class="t" style="left:445.71px;top:509.37px;font-size:14px;font-family:'Liberation Sans',sans-serif;color:#232629;;">10</div>
<div class="t" style="left:446.23px;top:536.04px;font-size:14px;font-family:'Liberation Sans',sans-serif;color:#232629;;">11</div>
<div class="t" style="left:445.71px;top:562.70px;font-size:14px;font-family:'Liberation Sans',sans-serif;color:#232629;;">12</div>
<div class="t" style="left:445.71px;top:589.38px;font-size:14px;font-family:'Liberation Sans',sans-serif;color:#232629;;">13</div>
<div class="t" style="left:445.71px;top:616.04px;font-size:14px;font-family:'Liberation Sans',sans-serif;color:#232629;;">14</div>
<div class="t" style="left:445.71px;top:642.71px;font-size:14px;font-family:'Liberation Sans',sans-serif;color:#232629;;">15</div>
<div class="t" style="left:445.71px;top:669.38px;font-size:14px;font-family:'Liberation Sans',sans-serif;color:#232629;;">16</div>
<div class="t" style="left:445.71px;top:696.05px;font-size:14px;font-family:'Liberation Sans',sans-serif;color:#232629;;">17</div>
<div class="t" style="left:445.71px;top:722.72px;font-size:14px;font-family:'Liberation Sans',sans-serif;color:#232629;;">18</div>
<div class="t" style="left:445.71px;top:749.39px;font-size:14px;font-family:'Liberation Sans',sans-serif;color:#232629;;">19</div>
<div class="t" style="left:445.71px;top:776.06px;font-size:14px;font-family:'Liberation Sans',sans-serif;color:#232629;;">20</div>
<div class="t" style="left:678.80px;top:240.80px;font-size:25px;font-family:'Liberation Serif',serif;color:#000;font-weight:bold;transform:scaleX(1.0179);">Expense</div>
<div class="t" style="left:679.10px;top:283.10px;font-size:25px;font-family:'Liberation Serif',serif;color:#000;;transform:scaleX(1.0187);">Compan</div>
<div class="t" style="left:478.20px;top:352.60px;font-size:14px;font-family:'Liberation Serif',serif;color:#000;font-weight:bold;font-style:italic;transform:scaleX(1.1323);">Employee Information</div>
<div class="t" style="left:1077.60px;top:352.60px;font-size:14px;font-family:'Liberation Serif',serif;color:#000;font-weight:bold;font-style:italic;transform:scaleX(1.1282);">Pay Period</div>
<div class="t" style="left:479.10px;top:379.10px;font-size:14px;font-family:'Liberation Sans',sans-serif;color:#000;;transform:scaleX(1.0787);">Name</div>
<div class="t" style="left:479.10px;top:406.00px;font-size:14px;font-family:'Liberation Sans',sans-serif;color:#000;;transform:scaleX(1.0617);">Employee ID</div>
<div class="t" style="left:479.10px;top:432.90px;font-size:14px;font-family:'Liberation Sans',sans-serif;color:#000;;transform:scaleX(1.1305);">Department</div>
<div class="t" style="left:1138.60px;top:379.00px;font-size:14px;font-family:'Liberation Sans',sans-serif;color:#000;;transform:scaleX(1.0774);">From</div>
<div class="t" style="left:1158.20px;top:405.90px;font-size:14px;font-family:'Liberation Sans',sans-serif;color:#000;;transform:scaleX(1.0543);">To</div>
<div class="t" style="left:511.00px;top:486.30px;font-size:14px;font-family:'Liberation Sans',sans-serif;color:#000;;transform:scaleX(1.0413);">Date</div>
<div class="t" style="left:578.80px;top:486.30px;font-size:14px;font-family:'Liberation Sans',sans-serif;color:#000;;transform:scaleX(1.1095);">Description</div>
<div class="t" style="left:708.20px;top:486.30px;font-size:14px;font-family:'Liberation Sans',sans-serif;color:#000;;transform:scaleX(1.0952);">Hotel</div>
<div class="t" style="left:810.10px;top:486.30px;font-size:14px;font-family:'Liberation Sans',sans-serif;color:#000;;transform:scaleX(1.0672);">Meal</div>
<div class="t" style="left:893.40px;top:486.30px;font-size:14px;font-family:'Liberation Sans',sans-serif;color:#000;;transform:scaleX(1.1130);">Transport</div>
<div class="t" style="left:1005.00px;top:486.30px;font-size:14px;font-family:'Liberation Sans',sans-serif;color:#000;;transform:scaleX(1.0498);">Phone</div>
<div class="t" style="left:1110.80px;top:486.30px;font-size:14px;font-family:'Liberation Sans',sans-serif;color:#000;;transform:scaleX(1.0840);">Misc</div>
<div class="t" style="left:1210.20px;top:486.30px;font-size:14px;font-family:'Liberation Sans',sans-serif;color:#000;;transform:scaleX(1.1022);">Total</div>
<div class="t" style="left:532.00px;top:783.80px;font-size:14px;font-family:'Liberation Sans',sans-serif;color:#1f2225;font-weight:bold;z-index:3;transform:scaleX(1.0714);">Sheet1</div>
<div class="t" style="left:436.70px;top:814.90px;font-size:14px;font-family:'Liberation Sans',sans-serif;color:#232629;;transform:scaleX(1.0640);">Sum: 0</div>
<div class="t" style="left:1115.00px;top:814.60px;font-size:14px;font-family:'Liberation Sans',sans-serif;color:#232629;;transform:scaleX(1.0332);">100%</div>
<div class="a" style="left:431px;top:780px;width:842px;height:21px;background:#f2f3f5;"></div>
<div class="a" style="left:610px;top:780px;width:642px;height:1px;background:#cdcfd1;"></div>
<div class="a" style="left:432px;top:781px;width:19px;height:19px;background:#eeeff1;border:1px solid #e2e3e5;border-radius:4px"></div>
<div class="a" style="left:453px;top:781px;width:19px;height:19px;background:#eeeff1;border:1px solid #e2e3e5;border-radius:4px"></div>
<div class="a" style="left:474px;top:781px;width:19px;height:19px;background:#eeeff1;border:1px solid #e2e3e5;border-radius:4px"></div>
<div class="a" style="left:495px;top:781px;width:19px;height:19px;background:#eeeff1;border:1px solid #e2e3e5;border-radius:4px"></div>
<svg class="i" style="left:432px;top:780.5px" width="80" height="19" viewBox="0 0 80 19">
<path d="M6.5 6 V13" stroke="#5c6064" stroke-width="1"/><path d="M12 6 L8 9.5 L12 13 Z" fill="#5c6064"/>
<path d="M32 6 L28 9.5 L32 13 Z" fill="#5c6064"/>
<path d="M49 6 L53 9.5 L49 13 Z" fill="#5c6064"/>
<path d="M70 6 L74 9.5 L70 13 Z" fill="#5c6064"/><path d="M75.5 6 V13" stroke="#5c6064" stroke-width="1"/>
</svg>
<svg class="i" style="left:517px;top:779px" width="86" height="23" viewBox="0 0 86 23"><path d="M2.5 0 V18 Q2.5 21.5 6 21.5 H73 L81.5 0" fill="#fff" stroke="#8e9194" stroke-width="1.2"/></svg>
<div class="a" style="left:613px;top:787px;width:169px;height:8px;background:#cbcccf;border:1px solid #bdbfc1;border-radius:4px"></div>
<div class="a" style="left:431px;top:801px;width:842px;height:1px;background:#c6c8ca;"></div>
<div class="a" style="left:1169px;top:818px;width:84px;height:6px;background:#d3d4d6;border:1px solid #c3c5c7;border-radius:3px"></div>
<div class="a" style="left:1169px;top:818px;width:40px;height:6px;background:#71c0e8;border-radius:3px"></div>
<div class="a" style="left:1202px;top:812px;width:17px;height:17px;background:#fcfcfc;border:1px solid #c0c2c4;border-radius:50%"></div>
</body></html>
